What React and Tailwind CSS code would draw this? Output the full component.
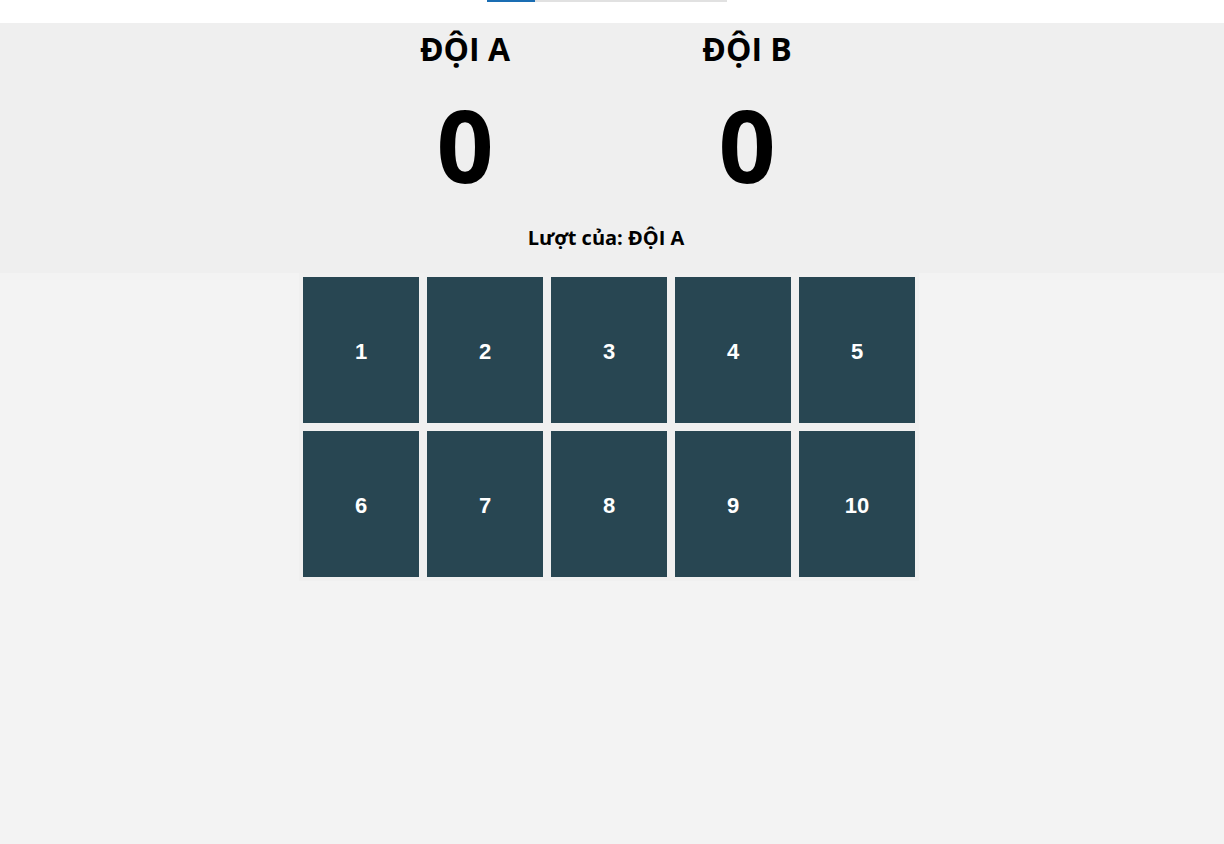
import React, { useState } from "react";

const teams = ["ĐỘI A", "ĐỘI B"];

export default function App() {
  const [scores] = useState([0, 0]);
  const [turn] = useState(0);
  const tiles = Array.from({ length: 10 }, (_, i) => i + 1);

  return (
    <div className="min-h-screen bg-[#f3f3f3] font-['Open_Sans','Noto_Sans',sans-serif] text-black">
      {/* progress bar */}
      <div className="h-[23px] bg-white">
        <div className="ml-[487px] flex h-[2px] w-[240px] bg-[#e1e1e1]">
          <div className="h-full w-[48px] bg-[#1a6db3]" />
        </div>
      </div>

      {/* scoreboard */}
      <div className="h-[250px] bg-[#efefef]">
        <div className="flex justify-center gap-[82px] pr-[12px]">
          {teams.map((name, i) => (
            <div key={name} className="flex w-[200px] flex-col items-center">
              <h2 className="mt-[6px] text-[32px] leading-[40px] font-bold">{name}</h2>
              <div className="mt-[25px] text-[100px] leading-none font-bold">{scores[i]}</div>
            </div>
          ))}
        </div>
        <p className="mt-[30px] pr-[12px] text-center text-[20px] leading-[28px] font-bold">
          Lượt của: {teams[turn]}
        </p>
      </div>

      {/* question tiles */}
      <div className="flex justify-center pr-[6px]">
        <div className="grid grid-cols-5 gap-2 bg-[#f0f0f0] p-1">
          {tiles.map((n) => (
            <button
              key={n}
              className="flex h-[146px] w-[116px] items-center justify-center bg-[#284652] pt-[2px] font-['Liberation_Sans',Arial,sans-serif] text-[22px] font-bold text-white"
            >
              {n}
            </button>
          ))}
        </div>
      </div>
    </div>
  );
}
